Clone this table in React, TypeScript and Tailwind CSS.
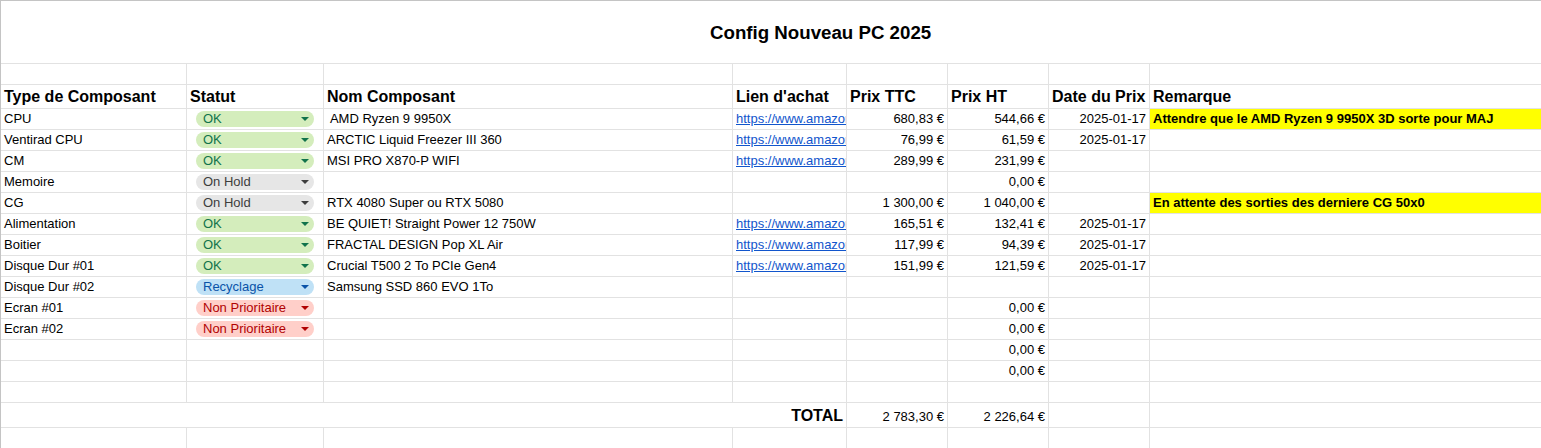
import type { ReactNode } from "react";

type Status = "OK" | "On Hold" | "Recyclage" | "Non Prioritaire";

interface Row {
  type?: string;
  status?: Status;
  nom?: string;
  link?: boolean;
  ttc?: string;
  ht?: string;
  date?: string;
  rem?: string;
}

const LINK = "https://www.amazon.fr/dp/B0DCG6Q5ZK";

const rows: Row[] = [
  { type: "CPU", status: "OK", nom: " AMD Ryzen 9 9950X", link: true, ttc: "680,83 €", ht: "544,66 €", date: "2025-01-17", rem: "Attendre que le AMD Ryzen 9 9950X 3D sorte pour MAJ" },
  { type: "Ventirad CPU", status: "OK", nom: "ARCTIC Liquid Freezer III 360", link: true, ttc: "76,99 €", ht: "61,59 €", date: "2025-01-17" },
  { type: "CM", status: "OK", nom: "MSI PRO X870-P WIFI", link: true, ttc: "289,99 €", ht: "231,99 €" },
  { type: "Memoire", status: "On Hold", ht: "0,00 €" },
  { type: "CG", status: "On Hold", nom: "RTX 4080 Super ou RTX 5080", ttc: "1 300,00 €", ht: "1 040,00 €", rem: "En attente des sorties des derniere CG 50x0" },
  { type: "Alimentation", status: "OK", nom: "BE QUIET! Straight Power 12 750W", link: true, ttc: "165,51 €", ht: "132,41 €", date: "2025-01-17" },
  { type: "Boitier", status: "OK", nom: "FRACTAL DESIGN Pop XL Air", link: true, ttc: "117,99 €", ht: "94,39 €", date: "2025-01-17" },
  { type: "Disque Dur #01", status: "OK", nom: "Crucial T500 2 To PCIe Gen4", link: true, ttc: "151,99 €", ht: "121,59 €", date: "2025-01-17" },
  { type: "Disque Dur #02", status: "Recyclage", nom: "Samsung SSD 860 EVO 1To" },
  { type: "Ecran #01", status: "Non Prioritaire", ht: "0,00 €" },
  { type: "Ecran #02", status: "Non Prioritaire", ht: "0,00 €" },
  { ht: "0,00 €" },
  { ht: "0,00 €" },
  {},
];

const chipStyles: Record<Status, string> = {
  OK: "bg-[#d4edbc] text-[#11734b]",
  "On Hold": "bg-[#e6e6e6] text-[#3d3d3d]",
  Recyclage: "bg-[#bfe1f6] text-[#0a53a8]",
  "Non Prioritaire": "bg-[#ffcfc9] text-[#b10202]",
};

function Cell({
  children,
  className = "",
  bg = "bg-white",
  pad = "px-[3px]",
}: {
  children?: ReactNode;
  className?: string;
  bg?: string;
  pad?: string;
}) {
  return (
    <div
      className={`flex items-end overflow-hidden whitespace-pre pb-[2px] text-[13px] leading-[16px] text-black ${pad} ${bg} ${className}`}
    >
      {children}
    </div>
  );
}

function Chip({ status }: { status: Status }) {
  return (
    <div
      className={`flex h-4 w-full items-center justify-between rounded-full pl-[7px] pr-[5px] text-[13px] leading-[16px] ${chipStyles[status]}`}
    >
      <span>{status}</span>
      <svg width="8" height="4" viewBox="0 0 8 4" className="fill-current">
        <path d="M0 0h8L4 4z" />
      </svg>
    </div>
  );
}

export default function App() {
  return (
    <div
      className="h-[448px] w-full overflow-hidden bg-white"
      style={{ fontFamily: '"Liberation Sans", Arial, sans-serif' }}
    >
      <div className="grid grid-cols-[185px_136px_408px_113px_100px_100px_100px_1fr] grid-rows-[62px_20px_23px_repeat(14,20px)_24px_20px] gap-px border-l border-t border-[#c4c4c4] bg-[#e2e2e2]">
        {/* Titre */}
        <div className="col-span-8 flex items-center bg-white pl-[709px] pt-[2px] text-[18.7px] font-bold text-black">
          Config Nouveau PC 2025
        </div>

        {/* Ligne vide */}
        {Array.from({ length: 8 }).map((_, i) => (
          <Cell key={`e${i}`} />
        ))}

        {/* En-têtes */}
        {["Type de Composant", "Statut", "Nom Composant", "Lien d'achat", "Prix TTC", "Prix HT", "Date du Prix", "Remarque"].map(
          (h) => (
            <Cell key={h} className="text-[16px] font-bold leading-[18px]">
              {h}
            </Cell>
          )
        )}

        {/* Composants */}
        {rows.map((r, i) => [
          <Cell key={`${i}-type`}>{r.type}</Cell>,
          <div key={`${i}-status`} className="flex items-center bg-white px-[9px]">
            {r.status && <Chip status={r.status} />}
          </div>,
          <Cell key={`${i}-nom`}>{r.nom}</Cell>,
          <Cell key={`${i}-link`} pad="pl-[3px]">
            {r.link && (
              <span className="block w-full overflow-hidden whitespace-nowrap text-[#1155cc] underline">
                {LINK}
              </span>
            )}
          </Cell>,
          <Cell key={`${i}-ttc`} className="justify-end">{r.ttc}</Cell>,
          <Cell key={`${i}-ht`} className="justify-end">{r.ht}</Cell>,
          <Cell key={`${i}-date`} className="justify-end">{r.date}</Cell>,
          <Cell
            key={`${i}-rem`}
            bg={r.rem ? "bg-[#ffff00]" : "bg-white"}
            className={r.rem ? "font-bold" : ""}
          >
            {r.rem}
          </Cell>,
        ])}

        {/* Total */}
        <Cell className="col-span-4 justify-end text-[16px] font-bold leading-[18px]">TOTAL</Cell>
        <Cell className="justify-end">2 783,30 €</Cell>
        <Cell className="justify-end">2 226,64 €</Cell>
        <Cell />
        <Cell />

        {/* Ligne vide */}
        {Array.from({ length: 8 }).map((_, i) => (
          <Cell key={`f${i}`} />
        ))}
      </div>
    </div>
  );
}
